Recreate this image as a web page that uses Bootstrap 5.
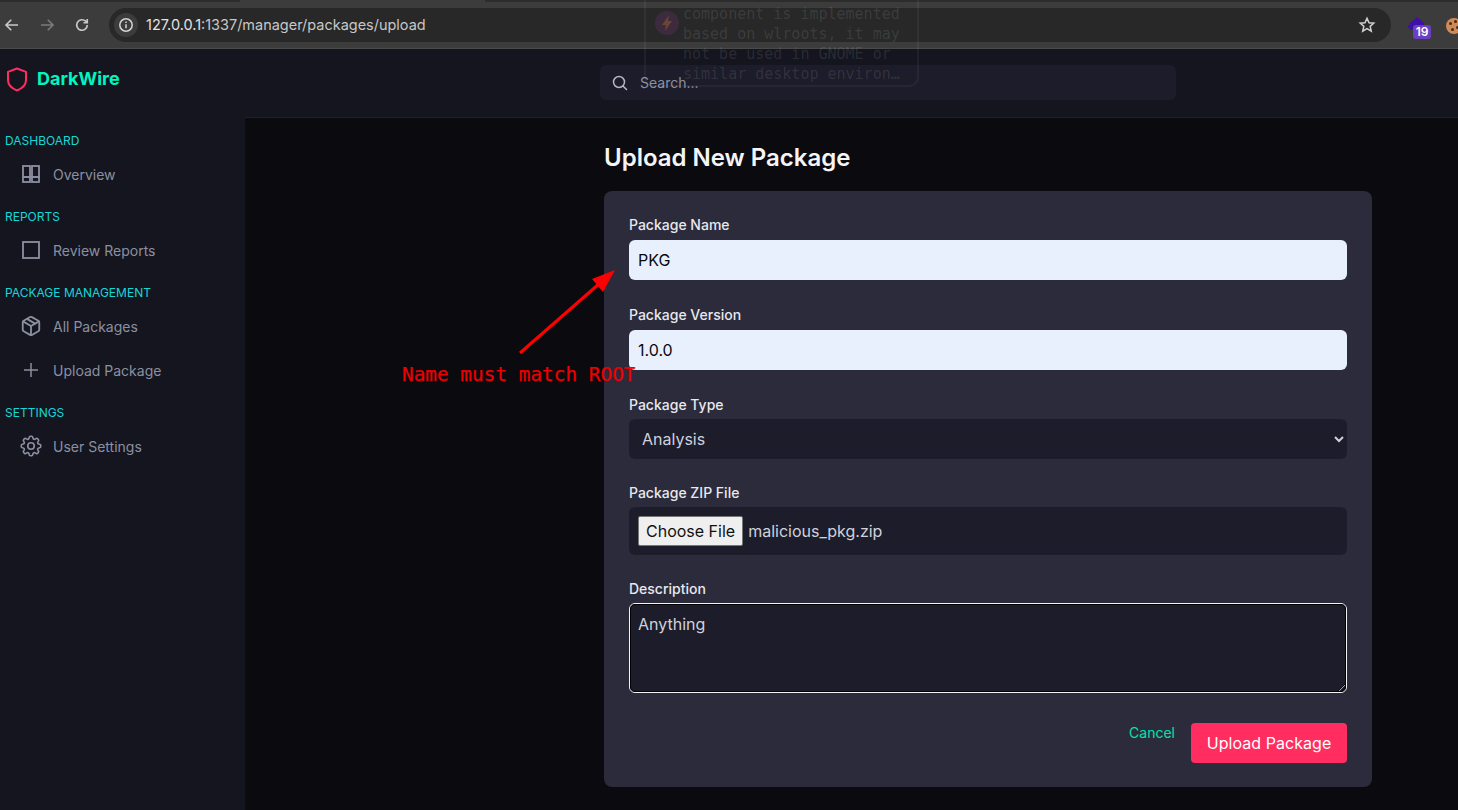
<!DOCTYPE html>
<html lang="en">
<head>
  <meta charset="UTF-8">
  <meta name="viewport" content="width=device-width, initial-scale=1.0">
  <title>DarkWire - Upload Package</title>
  <link href="https://cdn.jsdelivr.net/npm/bootstrap@5.3.0/dist/css/bootstrap.min.css" rel="stylesheet">
  <style>
    html, body { height: 100%; }
    body {
      background-color: #0a0a0f;
      font-family: Inter, "Liberation Sans", sans-serif;
      overflow: hidden;
      position: relative;
    }
    /* browser chrome */
    .browser-bar { height: 49px; background: #3c3c3c; border-bottom: 1px solid #4a4a4a; position: relative; }
    .tab-edge { height: 2px; background: #2c2c2c; position: absolute; top: 0; }
    .tab-edge-a { left: 0; width: 240px; }
    .tab-edge-b { left: 485px; right: 0; }
    .tool-row { height: 100%; padding-top: 2px; }
    .tool-btn { width: 18px; height: 18px; color: #c7c7c7; }
    .tool-off { color: #7a7a7a; }
    .tool-first { margin-left: 3px; }
    .tool-next { margin-left: 17px; }
    .url-pill {
      position: absolute; left: 109px; top: 8px; width: 1282px; height: 34px;
      background: #282828; border-radius: 17px; color: #c7c7c7; font-size: 14.48px;
    }
    .site-info { width: 24px; height: 24px; margin-left: 5px; border-radius: 50%; background: #3c3c3c; }
    .url-text { margin-left: 8px; }
    .url-host { color: #e3e3e3; }
    .star-icon { margin-right: 15px; }
    .ext-one { position: absolute; left: 1408px; top: 16px; width: 24px; height: 24px; }
    .ext-one svg { display: block; }
    .ext-badge {
      position: absolute; left: 5px; top: 9px; width: 18px; height: 14px; background: #6b3fc4; color: #fff;
      font-size: 12px; font-weight: 600; line-height: 14px; text-align: center; border-radius: 3px;
    }
    .ext-two { position: absolute; left: 1446px; top: 18px; width: 16px; height: 16px; border-radius: 50%; background: #d08a58; }
    .ext-two i { position: absolute; width: 3px; height: 3px; border-radius: 50%; background: #4a2a14; }
    .chip-a { left: 3px; top: 4px; }
    .chip-b { left: 8px; top: 2px; }
    .chip-c { left: 5px; top: 10px; }
    .chip-d { left: 10px; top: 8px; }
    /* faded desktop notification showing through */
    .ghost-note {
      position: absolute; left: 644px; top: -30px; width: 275px; height: 117px; z-index: 5;
      border: 2px solid rgba(255,255,255,.05); border-radius: 10px; pointer-events: none;
      font-family: "DejaVu Sans Mono", monospace; font-size: 15px; line-height: 20px;
      color: rgba(255,255,255,.1); padding: 32px 0 0 37px; white-space: nowrap; overflow: hidden;
    }
    .ghost-dot { position: absolute; left: 9px; top: 39px; width: 24px; height: 24px; }
    /* app shell */
    .shell { height: 761px; }
    .side-col { width: 245px; background: #14151f; flex-shrink: 0; }
    .brand-row { height: 60px; padding-left: 6px; }
    .brand-name { color: #00f5c0; font-size: 18px; font-weight: 700; line-height: 1; margin-left: 9px; }
    .nav-sec { color: #14d8d8; font-size: 12px; line-height: 18px; padding-left: 5px; margin-top: 12px; margin-bottom: 2px; }
    .nav-sec-first { margin-top: 23px; }
    .nav-row { height: 44px; padding-left: 22px; color: #8b90a0; font-size: 14px; text-decoration: none; }
    .nav-row svg { width: 18px; height: 18px; margin-right: 13px; flex-shrink: 0; }
    .nav-row .ico-cube { width: 22px; height: 22px; margin-left: -2px; margin-right: 11px; }
    .nav-row .ico-gear { width: 26px; height: 26px; margin-left: -4px; margin-right: 9px; }
    .top-strip { height: 69px; background: #14151f; border-bottom: 1px solid #1e1f2b; }
    .search-box {
      margin-left: 355px; margin-top: 16px; width: 576px; height: 35px; background: #1c1c2a;
      border-radius: 6px; color: #8b90a0; font-size: 14px; padding-left: 12px;
    }
    .search-box svg { width: 16px; height: 16px; color: #b5b8c2; margin-right: 12px; }
    .main-col { min-width: 0; }
    .page-wrap { width: 768px; margin-left: 359px; padding-top: 24px; }
    .page-title { color: #f5f5f7; font-size: 24px; font-weight: 600; line-height: 32px; margin: 0 0 17px; }
    .upload-panel { background: #2b2b3b; border: 0; border-radius: 8px; padding: 24px 25px; }
    .fld-label { display: block; color: #e8e8ee; font-size: 14px; font-weight: 500; line-height: 20px; margin-bottom: 5px; }
    .fld-label-low { padding-top: 1px; margin-bottom: 4px; }
    .fld-25 { margin-bottom: 25px; }
    .fld-24 { margin-bottom: 24px; }
    .fld-23 { margin-bottom: 23px; }
    .upload-panel .form-control, .upload-panel .form-select {
      height: 40px; border: 0; border-radius: 6px; font-size: 16px; padding: 0 9px;
      background-color: #1c1c2a; color: #cfd2dc; box-shadow: none;
    }
    .upload-panel .auto-filled { background-color: #e8f0fe; color: #0a0a0f; }
    .upload-panel .form-select { appearance: auto; background-image: none; }
    .file-box { height: 48px; background: #1c1c2a; border-radius: 6px; padding-left: 9px; color: #cfd2dc; font-size: 16px; }
    .file-btn {
      background: #efefef; border: 1px solid #767676; border-radius: 2px; color: #111;
      font-size: 16px; line-height: 1; height: 30px; padding: 0 7px; margin-right: 5px;
      font-family: Inter, "Liberation Sans", sans-serif;
    }
    .upload-panel textarea.form-control {
      height: 90px; padding: 8px 8px; border: 1px solid #f2f2f2; border-radius: 6px; outline: 1px solid #000; outline-offset: -2px;
    }
    .form-actions { margin-top: 30px; }
    .cancel-link { color: #00e5ae; font-size: 14px; line-height: 20px; text-decoration: none; margin-right: 16px; }
    .upload-btn {
      background: #ff2d60; border: 0; color: #fff; font-size: 16px; height: 40px; width: 156px;
      border-radius: 4px; padding: 0; letter-spacing: .05px;
    }
    /* red annotation drawn on the screenshot */
    .note-arrow { position: absolute; left: 0; top: 0; width: 1458px; height: 810px; z-index: 6; pointer-events: none; }
    .note-text {
      position: absolute; left: 402px; top: 363px; z-index: 6; color: #ee0000; white-space: nowrap;
      font-family: "DejaVu Sans Mono", monospace; font-size: 19.4px; line-height: 24px; -webkit-text-stroke: .25px #ee0000;
    }
  </style>
</head>
<body>

<div class="browser-bar">
  <div class="tab-edge tab-edge-a"></div>
  <div class="tab-edge tab-edge-b"></div>
  <div class="tool-row d-flex align-items-center">
    <svg class="tool-btn tool-first" viewBox="0 0 24 24" fill="none" stroke="currentColor" stroke-width="2.2"><path d="M20 12H5M11 5l-7 7 7 7"/></svg>
    <svg class="tool-btn tool-off tool-next" viewBox="0 0 24 24" fill="none" stroke="currentColor" stroke-width="2.2"><path d="M4 12h15M13 5l7 7-7 7"/></svg>
    <svg class="tool-btn tool-next" viewBox="0 0 24 24" fill="none" stroke="currentColor" stroke-width="2.2"><path d="M19 12a7 7 0 1 1-2.2-5.100L19 9M19 4v5h-5"/></svg>
  </div>
  <div class="url-pill d-flex align-items-center">
    <span class="site-info d-flex align-items-center justify-content-center">
      <svg width="16" height="16" viewBox="0 0 16 16" fill="none" stroke="#d5d5d5" stroke-width="1.5"><circle cx="8" cy="8" r="6.200"/><path d="M8 7.200v4M8 4.600v1.400"/></svg>
    </span>
    <span class="url-text"><span class="url-host">127.0.0.1</span>:1337/manager/packages/upload</span>
    <svg class="ms-auto star-icon" width="18" height="18" viewBox="0 0 24 24" fill="none" stroke="#d0d0d0" stroke-width="2"><path d="M12 3l2.700 6 6.300.6-4.800 4.200 1.500 6.400L12 16.800l-5.700 3.400 1.500-6.400L3 9.600 9.300 9z"/></svg>
  </div>
  <div class="ext-one">
    <svg width="18" height="14" viewBox="0 0 18 14" fill="#3f10a8"><path d="M9 1l8 7H1z"/><rect x="2" y="8" width="14" height="6"/><rect x="0" y="9" width="2" height="3"/></svg>
    <span class="ext-badge">19</span>
  </div>
  <div class="ext-two"><i class="chip-a"></i><i class="chip-b"></i><i class="chip-c"></i><i class="chip-d"></i></div>
</div>

<div class="ghost-note">
  <svg class="ghost-dot" viewBox="0 0 24 24"><circle cx="12" cy="12" r="12" fill="#a03ca0" opacity=".18"/><path d="M14 4 7 14h4l-1 6 7-10h-4z" fill="#d08020" opacity=".3"/></svg>
  component is implemented<br>based on wlroots, it may<br>not be used in GNOME or<br>similar desktop environ…
</div>

<div class="shell d-flex">
  <aside class="side-col">
    <div class="brand-row d-flex align-items-center">
      <svg width="22" height="25" viewBox="0 0 22 25" fill="none" stroke="#ff2d60" stroke-width="2" stroke-linejoin="round"><path d="M11 1.500l9 3.400v8.200c0 4.800-3.600 8.300-9 10.400-5.400-2.100-9-5.600-9-10.400V4.900z"/></svg>
      <span class="brand-name">DarkWire</span>
    </div>
    <div class="nav-sec nav-sec-first">DASHBOARD</div>
    <a class="nav-row d-flex align-items-center" href="#">
      <svg viewBox="0 0 18 18" fill="none" stroke="currentColor" stroke-width="1.8"><rect x="1" y="1" width="7" height="11"/><rect x="10" y="1" width="7" height="11"/><rect x="1" y="12" width="7" height="5"/><rect x="10" y="12" width="7" height="5"/></svg>
      Overview
    </a>
    <div class="nav-sec">REPORTS</div>
    <a class="nav-row d-flex align-items-center" href="#">
      <svg viewBox="0 0 18 18" fill="none" stroke="currentColor" stroke-width="1.8"><rect x="1" y="1" width="16" height="16"/></svg>
      Review Reports
    </a>
    <div class="nav-sec">PACKAGE MANAGEMENT</div>
    <a class="nav-row d-flex align-items-center" href="#">
      <svg class="ico-cube" viewBox="0 0 24 24" fill="none" stroke="currentColor" stroke-width="2" stroke-linecap="round" stroke-linejoin="round"><path d="M16.500 9.400 7.550 4.240"/><path d="M21 16V8a2 2 0 0 0-1-1.730l-7-4a2 2 0 0 0-2 0l-7 4A2 2 0 0 0 3 8v8a2 2 0 0 0 1 1.730l7 4a2 2 0 0 0 2 0l7-4A2 2 0 0 0 21 16z"/><path d="M3.290 7 12 12l8.710-5M12 22V12"/></svg>
      All Packages
    </a>
    <a class="nav-row d-flex align-items-center" href="#">
      <svg viewBox="0 0 18 18" fill="none" stroke="currentColor" stroke-width="1.5"><path d="M9 2v14M2 9h14"/></svg>
      Upload Package
    </a>
    <div class="nav-sec">SETTINGS</div>
    <a class="nav-row d-flex align-items-center" href="#">
      <svg class="ico-gear" viewBox="0 0 24 24" fill="none" stroke="currentColor" stroke-width="1.5" stroke-linejoin="round"><path d="M10.343 3.940c.09-.542.56-.94 1.110-.94h1.093c.55 0 1.020.398 1.110.94l.149.894c.07.424.384.764.78.93.398.164.855.142 1.205-.108l.737-.527a1.125 1.125 0 0 1 1.450.12l.773.774c.39.389.44 1.002.12 1.450l-.527.737c-.25.35-.272.806-.107 1.204.165.397.505.71.93.78l.893.15c.543.09.94.56.94 1.109v1.094c0 .55-.397 1.020-.94 1.110l-.893.149c-.425.07-.765.383-.93.78-.165.398-.143.854.107 1.204l.527.738c.32.447.269 1.060-.12 1.450l-.774.773a1.125 1.125 0 0 1-1.449.12l-.738-.527c-.35-.25-.806-.272-1.203-.107-.397.165-.71.505-.781.929l-.149.894c-.09.542-.56.94-1.110.94h-1.094c-.55 0-1.019-.398-1.110-.94l-.148-.894c-.071-.424-.384-.764-.781-.93-.398-.164-.854-.142-1.204.108l-.738.527c-.447.32-1.060.269-1.450-.12l-.773-.774a1.125 1.125 0 0 1-.12-1.450l.527-.737c.25-.35.273-.806.108-1.204-.165-.397-.506-.71-.93-.78l-.894-.15c-.542-.09-.94-.56-.94-1.109v-1.094c0-.55.398-1.020.94-1.110l.894-.149c.424-.07.765-.383.93-.78.165-.398.143-.854-.107-1.204l-.527-.738a1.125 1.125 0 0 1 .12-1.450l.773-.773a1.125 1.125 0 0 1 1.450-.12l.737.527c.35.25.807.272 1.204.107.397-.165.71-.505.78-.929l.15-.894z"/><circle cx="12" cy="12" r="3"/></svg>
      User Settings
    </a>
  </aside>

  <div class="main-col flex-grow-1">
    <div class="top-strip d-flex">
      <div class="search-box d-flex align-items-center">
        <svg viewBox="0 0 16 16" fill="none" stroke="currentColor" stroke-width="1.5" stroke-linecap="round"><circle cx="7" cy="7" r="5.500"/><path d="M11.200 11.200 14.500 14.500"/></svg>
        Search...
      </div>
    </div>
    <main class="page-wrap">
      <h1 class="page-title">Upload New Package</h1>
      <form class="upload-panel">
        <div class="fld-25">
          <label class="fld-label" for="pkgName">Package Name</label>
          <input class="form-control auto-filled" id="pkgName" value="PKG">
        </div>
        <div class="fld-24">
          <label class="fld-label" for="pkgVersion">Package Version</label>
          <input class="form-control auto-filled" id="pkgVersion" value="1.0.0">
        </div>
        <div class="fld-23">
          <label class="fld-label fld-label-low" for="pkgType">Package Type</label>
          <select class="form-select" id="pkgType"><option>Analysis</option></select>
        </div>
        <div class="fld-23">
          <div class="fld-label fld-label-low">Package ZIP File</div>
          <div class="file-box d-flex align-items-center">
            <button type="button" class="file-btn">Choose File</button>
            malicious_pkg.zip
          </div>
        </div>
        <div>
          <label class="fld-label fld-label-low" for="pkgDesc">Description</label>
          <textarea class="form-control" id="pkgDesc">Anything</textarea>
        </div>
        <div class="form-actions d-flex justify-content-end align-items-start">
          <a class="cancel-link" href="#">Cancel</a>
          <button type="button" class="btn upload-btn">Upload Package</button>
        </div>
      </form>
    </main>
  </div>
</div>

<svg class="note-arrow" viewBox="0 0 1458 810"><path d="M520 353 600 283" stroke="#f00" stroke-width="3" fill="none"/><path d="M615 270 592 279 603 292z" fill="#f00"/></svg>
<div class="note-text">Name must match ROOT</div>

<script src="https://cdn.jsdelivr.net/npm/bootstrap@5.3.0/dist/js/bootstrap.bundle.min.js"></script>
</body>
</html>
